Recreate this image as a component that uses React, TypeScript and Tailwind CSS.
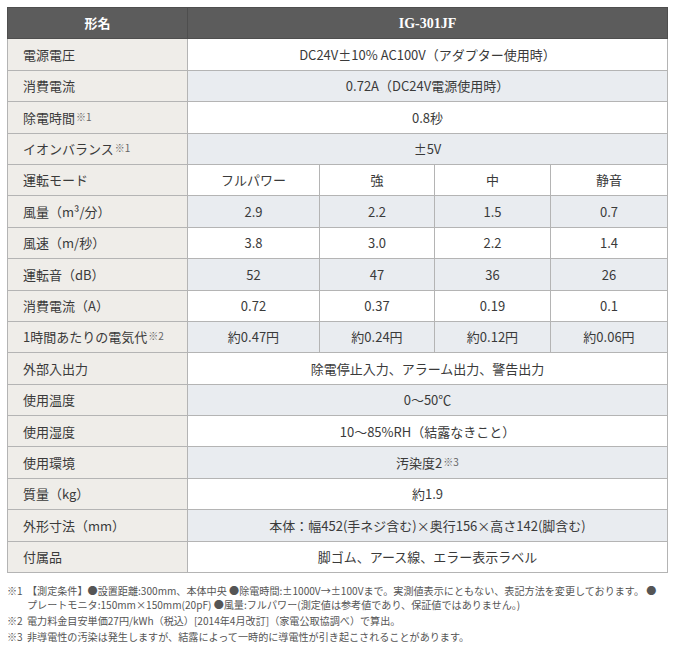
import React from 'react';

type Row = {
  label: string;
  sup?: string;
  values: string[];
  valueSup?: string;
};

const rows: Row[] = [
  { label: '電源電圧', values: ['DC24V±10% AC100V（アダプター使用時）'] },
  { label: '消費電流', values: ['0.72A（DC24V電源使用時）'] },
  { label: '除電時間', sup: '※1', values: ['0.8秒'] },
  { label: 'イオンバランス', sup: '※1', values: ['±5V'] },
  { label: '運転モード', values: ['フルパワー', '強', '中', '静音'] },
  { label: '風量（m³/分）', values: ['2.9', '2.2', '1.5', '0.7'] },
  { label: '風速（m/秒）', values: ['3.8', '3.0', '2.2', '1.4'] },
  { label: '運転音（dB）', values: ['52', '47', '36', '26'] },
  { label: '消費電流（A）', values: ['0.72', '0.37', '0.19', '0.1'] },
  { label: '1時間あたりの電気代', sup: '※2', values: ['約0.47円', '約0.24円', '約0.12円', '約0.06円'] },
  { label: '外部入出力', values: ['除電停止入力、アラーム出力、警告出力'] },
  { label: '使用温度', values: ['0～50℃'] },
  { label: '使用湿度', values: ['10～85%RH（結露なきこと）'] },
  { label: '使用環境', values: ['汚染度2'], valueSup: '※3' },
  { label: '質量（kg）', values: ['約1.9'] },
  { label: '外形寸法（mm）', values: ['本体：幅452(手ネジ含む)×奥行156×高さ142(脚含む)'] },
  { label: '付属品', values: ['脚ゴム、アース線、エラー表示ラベル'] },
];

const Sup = ({ children }: { children: string }) => (
  <sup className="text-[10px] text-[#666] ml-[1px] relative -top-[2px]">{children}</sup>
);

export default function App() {
  return (
    <div
      className="bg-white w-[677px] min-h-[653px] pt-[7px] px-[7px] text-[#3a3a3a]"
      style={{ fontFamily: '"Noto Sans CJK JP", "Noto Sans", sans-serif' }}
    >
      <table className="border-collapse table-fixed w-[660px] text-[13px]">
        <colgroup>
          <col className="w-[180px]" />
          <col className="w-[132px]" />
          <col className="w-[115px]" />
          <col className="w-[116px]" />
          <col className="w-[117px]" />
        </colgroup>
        <thead>
          <tr className="h-[31.4px] bg-[#5c5c5c] text-white">
            <th className="border border-[#4e4e4e] font-bold text-[13px] text-center">形名</th>
            <th
              colSpan={4}
              className="border border-[#4e4e4e] font-bold text-[14px] text-center"
              style={{ fontFamily: '"Liberation Serif", "DejaVu Serif", serif' }}
            >
              IG-301JF
            </th>
          </tr>
        </thead>
        <tbody>
          {rows.map((r, i) => (
            <tr key={i} className={`h-[31.4px] ${i % 2 === 1 ? 'bg-[#e9ecf0]' : 'bg-white'}`}>
              <td className="border border-[#b4b4b4] bg-[#efede9] pl-[15px] whitespace-nowrap">
                {r.label}
                {r.sup && <Sup>{r.sup}</Sup>}
              </td>
              {r.values.length === 1 ? (
                <td colSpan={4} className="border border-[#b4b4b4] text-center">
                  {r.values[0]}
                  {r.valueSup && <Sup>{r.valueSup}</Sup>}
                </td>
              ) : (
                r.values.map((v, j) => (
                  <td key={j} className="border border-[#b4b4b4] text-center">
                    {v}
                  </td>
                ))
              )}
            </tr>
          ))}
        </tbody>
      </table>

      <div className="mt-[11px] text-[10.1px] leading-[14px] text-[#555] flex flex-col gap-[2px] whitespace-nowrap">
        <div className="flex">
          <span className="w-[20px] shrink-0">※1</span>
          <span>
            【測定条件】●設置距離:300mm、本体中央 ●除電時間:±1000V→±100Vまで。実測値表示にともない、表記方法を変更しております。 ●
            <br />
            プレートモニタ:150mm×150mm(20pF) ●風量:フルパワー(測定値は参考値であり、保証値ではありません。)
          </span>
        </div>
        <div className="flex">
          <span className="w-[20px] shrink-0">※2</span>
          <span>電力料金目安単価27円/kWh（税込）[2014年4月改訂]（家電公取協調べ）で算出。</span>
        </div>
        <div className="flex">
          <span className="w-[20px] shrink-0">※3</span>
          <span>非導電性の汚染は発生しますが、結露によって一時的に導電性が引き起こされることがあります。</span>
        </div>
      </div>
    </div>
  );
}
